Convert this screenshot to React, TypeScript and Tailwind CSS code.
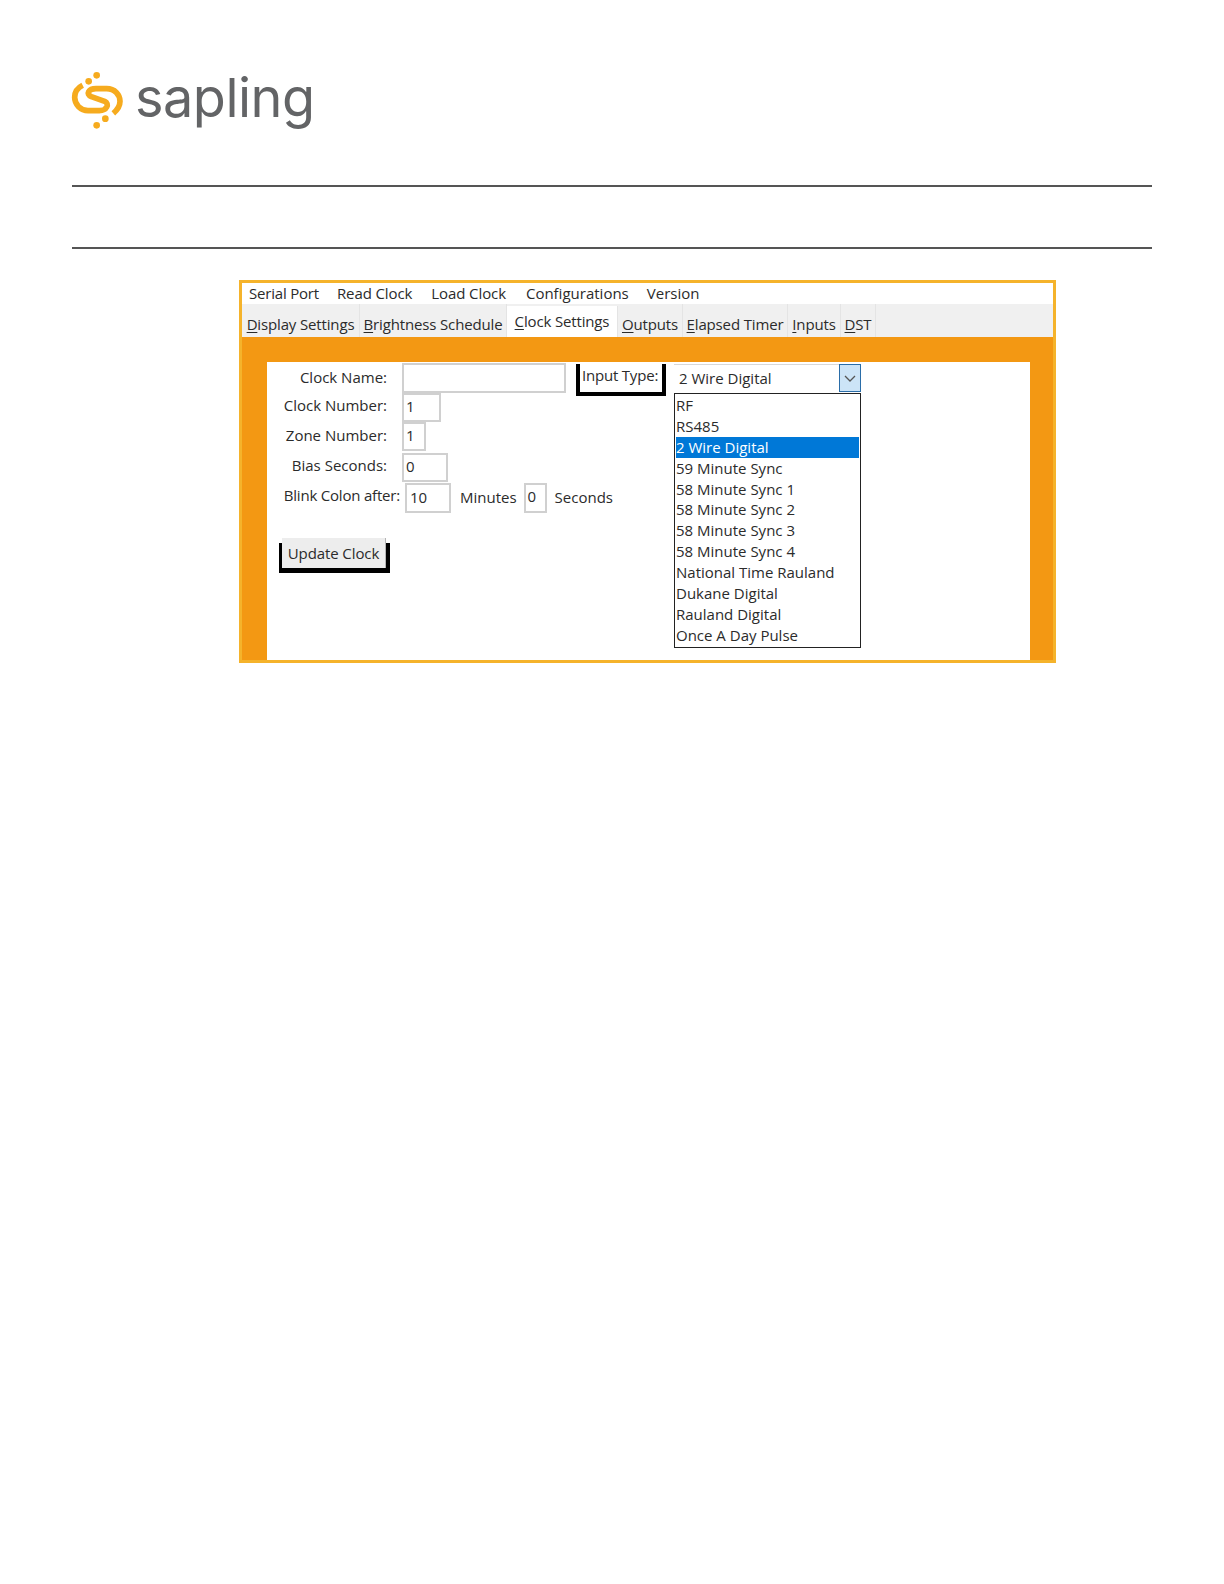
const font = "font-['Open_Sans','Noto_Sans',sans-serif]";

function Logo() {
  return (
    <div className="flex items-start h-[71px]">
      <svg width="64" height="68" viewBox="0 0 192 204" fill="none" className="shrink-0 -ml-[6px]">
        <path
          d="M50 58C34 66 26 80 26 94C26 116 44 134 66 134L100 134C122 134 132 114 116 106L76 92C58 84 68 68 90 68L122 68C146 68 162 86 162 106C162 120 154 132 142 142"
          stroke="#f6ab1e"
          strokeWidth="17"
          strokeLinejoin="round"
        />
        <g fill="#f6ab1e">
          <circle cx="92" cy="28" r="10" />
          <circle cx="68" cy="46" r="10" />
          <circle cx="118" cy="158" r="10" />
          <circle cx="92" cy="178" r="10" />
        </g>
      </svg>
      <span className="ml-[5px] font-['Inter',sans-serif] font-normal text-[54px] leading-[70px] text-[#636466] -mt-[3px] tracking-[-0.5px]">sapling</span>
    </div>
  );
}

const items = ["RF", "RS485", "2 Wire Digital", "59 Minute Sync", "58 Minute Sync 1", "58 Minute Sync 2", "58 Minute Sync 3", "58 Minute Sync 4", "National Time Rauland", "Dukane Digital", "Rauland Digital", "Once A Day Pulse"];

function Tab({ w, u, rest, active }: { w: string; u: string; rest: string; active?: boolean }) {
  return (
    <div className={`${w} flex items-center justify-center border-r border-[#e4e4e4] whitespace-nowrap -tracking-[0.15px] ${active ? "bg-white h-[31px] pb-[1px]" : "h-full pt-[7px]"}`}>
      <span><span className="underline underline-offset-2">{u}</span>{rest}</span>
    </div>
  );
}

function Box({ w, h, value, extra }: { w: string; h: string; value?: string; extra?: string }) {
  return <div className={`${w} ${h} shrink-0 border-2 border-[#d0d0d0] pl-[2px] leading-[22px] ${extra ?? ""}`}>{value}</div>;
}

function Row({ label, h, labelPad, children }: { label: string; h: string; labelPad: string; children: React.ReactNode }) {
  return (
    <div className={`flex ${h}`}>
      <span className={`w-[120px] text-right whitespace-nowrap ${labelPad}`}>{label}</span>
      <div className="ml-[15px]">{children}</div>
    </div>
  );
}

export default function App() {
  return (
    <div className={`w-[1224px] h-[1584px] bg-white px-[72px] pt-[66px] text-[15px] text-[#2b2b2b] ${font}`}>
      <Logo />
      <div className="mt-[48px] h-[2px] bg-[#555]" />
      <div className="mt-[60px] h-[2px] bg-[#555]" />
      <div className="mt-[31px] ml-[167px] w-[817px] h-[383px] border-[3px] border-[#f5b32b] bg-[#f39813] flex flex-col">
        <div className="h-[21px] bg-white flex items-center pl-[7px] gap-[18px] leading-none whitespace-nowrap">
          <span className="-tracking-[0.2px]">Serial Port</span><span className="-tracking-[0.1px]">Read Clock</span><span className="-tracking-[0.1px] ml-[1px]">Load Clock</span><span className="ml-[2px]">Configurations</span><span>Version</span>
        </div>
        <div className="h-[33px] bg-[#f0f0f0] flex items-end">
          <Tab w="w-[118px]" u="D" rest="isplay Settings" />
          <Tab w="w-[147px]" u="B" rest="rightness Schedule" />
          <Tab w="w-[111px]" u="C" rest="lock Settings" active />
          <Tab w="w-[65px]" u="O" rest="utputs" />
          <Tab w="w-[105px]" u="E" rest="lapsed Timer" />
          <Tab w="w-[53px]" u="I" rest="nputs" />
          <Tab w="w-[35px]" u="D" rest="ST" />
        </div>
        <div className="flex-1 px-[25px] pt-[25px]">
          <div className="h-[298px] w-[763px] bg-white flex">
            <div className="w-[307px] shrink-0 flex flex-col pt-[1px]">
              <Row label="Clock Name:" h="h-[30px]" labelPad="pt-[3px]"><Box w="w-[164px]" h="h-[30px]" /></Row>
              <Row label="Clock Number:" h="h-[29px]" labelPad="pt-[1px]"><Box w="w-[39px]" h="h-[29px]" value="1" /></Row>
              <Row label="Zone Number:" h="h-[31px]" labelPad="pt-[2px]"><Box w="w-[24px]" h="h-[29px]" value="1" /></Row>
              <Row label="Bias Seconds:" h="h-[30px]" labelPad="pt-[1px]"><Box w="w-[46px]" h="h-[29px]" value="0" /></Row>
              <div className="flex items-start h-[30px] whitespace-nowrap">
                <span className="w-[133px] shrink-0 text-right pt-[1px] -tracking-[0.2px]">Blink Colon after:</span>
                <Box w="w-[46px]" h="h-[30px]" value="10" extra="ml-[5px] pl-[3px] leading-[24px]" />
                <span className="ml-[9px] pt-[3px] shrink-0">Minutes</span>
                <Box w="w-[23px]" h="h-[30px]" value="0" extra="ml-[7px]" />
                <span className="ml-[8px] pt-[3px] shrink-0">Seconds</span>
              </div>
              <button className="mt-[25px] ml-[15px] w-[104px] h-[30px] bg-[#ededed] border-r border-[#b5b5b5] shadow-[-3px_5px_0_#000,4px_5px_0_#000] text-center leading-[28px] whitespace-nowrap cursor-default -tracking-[0.1px]">Update Clock</button>
            </div>
            <div className="ml-[2px] mt-[2px] w-[90px] h-[32px] border-l-[4px] border-r-[4px] border-b-[4px] border-black pl-[2px] leading-[22px] whitespace-nowrap -tracking-[0.2px]">Input Type:</div>
            <div className="ml-[8px] mt-[2px] w-[187px] flex flex-col">
              <div className="h-[29px] flex">
                <span className="flex-1 pl-[5px] leading-[26px] border-t border-[#d8d8d8]">2 Wire Digital</span>
                <div className="w-[22px] h-[28px] bg-[#cce4f7] border border-[#2a6da8] flex items-center justify-center">
                  <svg width="14" height="9" viewBox="0 0 14 9" fill="none"><path d="M2 2L7 7L12 2" stroke="#555" strokeWidth="1.3" /></svg>
                </div>
              </div>
              <div className="h-[255px] border border-[#222] px-px pt-px whitespace-nowrap">
                {items.map((t, i) => (
                  <div key={t} className={`h-[20.9px] leading-[20px] ${i === 2 ? "bg-[#0078d7] text-white" : ""}`}>{t}</div>
                ))}
              </div>
            </div>
          </div>
        </div>
      </div>
    </div>
  );
}
